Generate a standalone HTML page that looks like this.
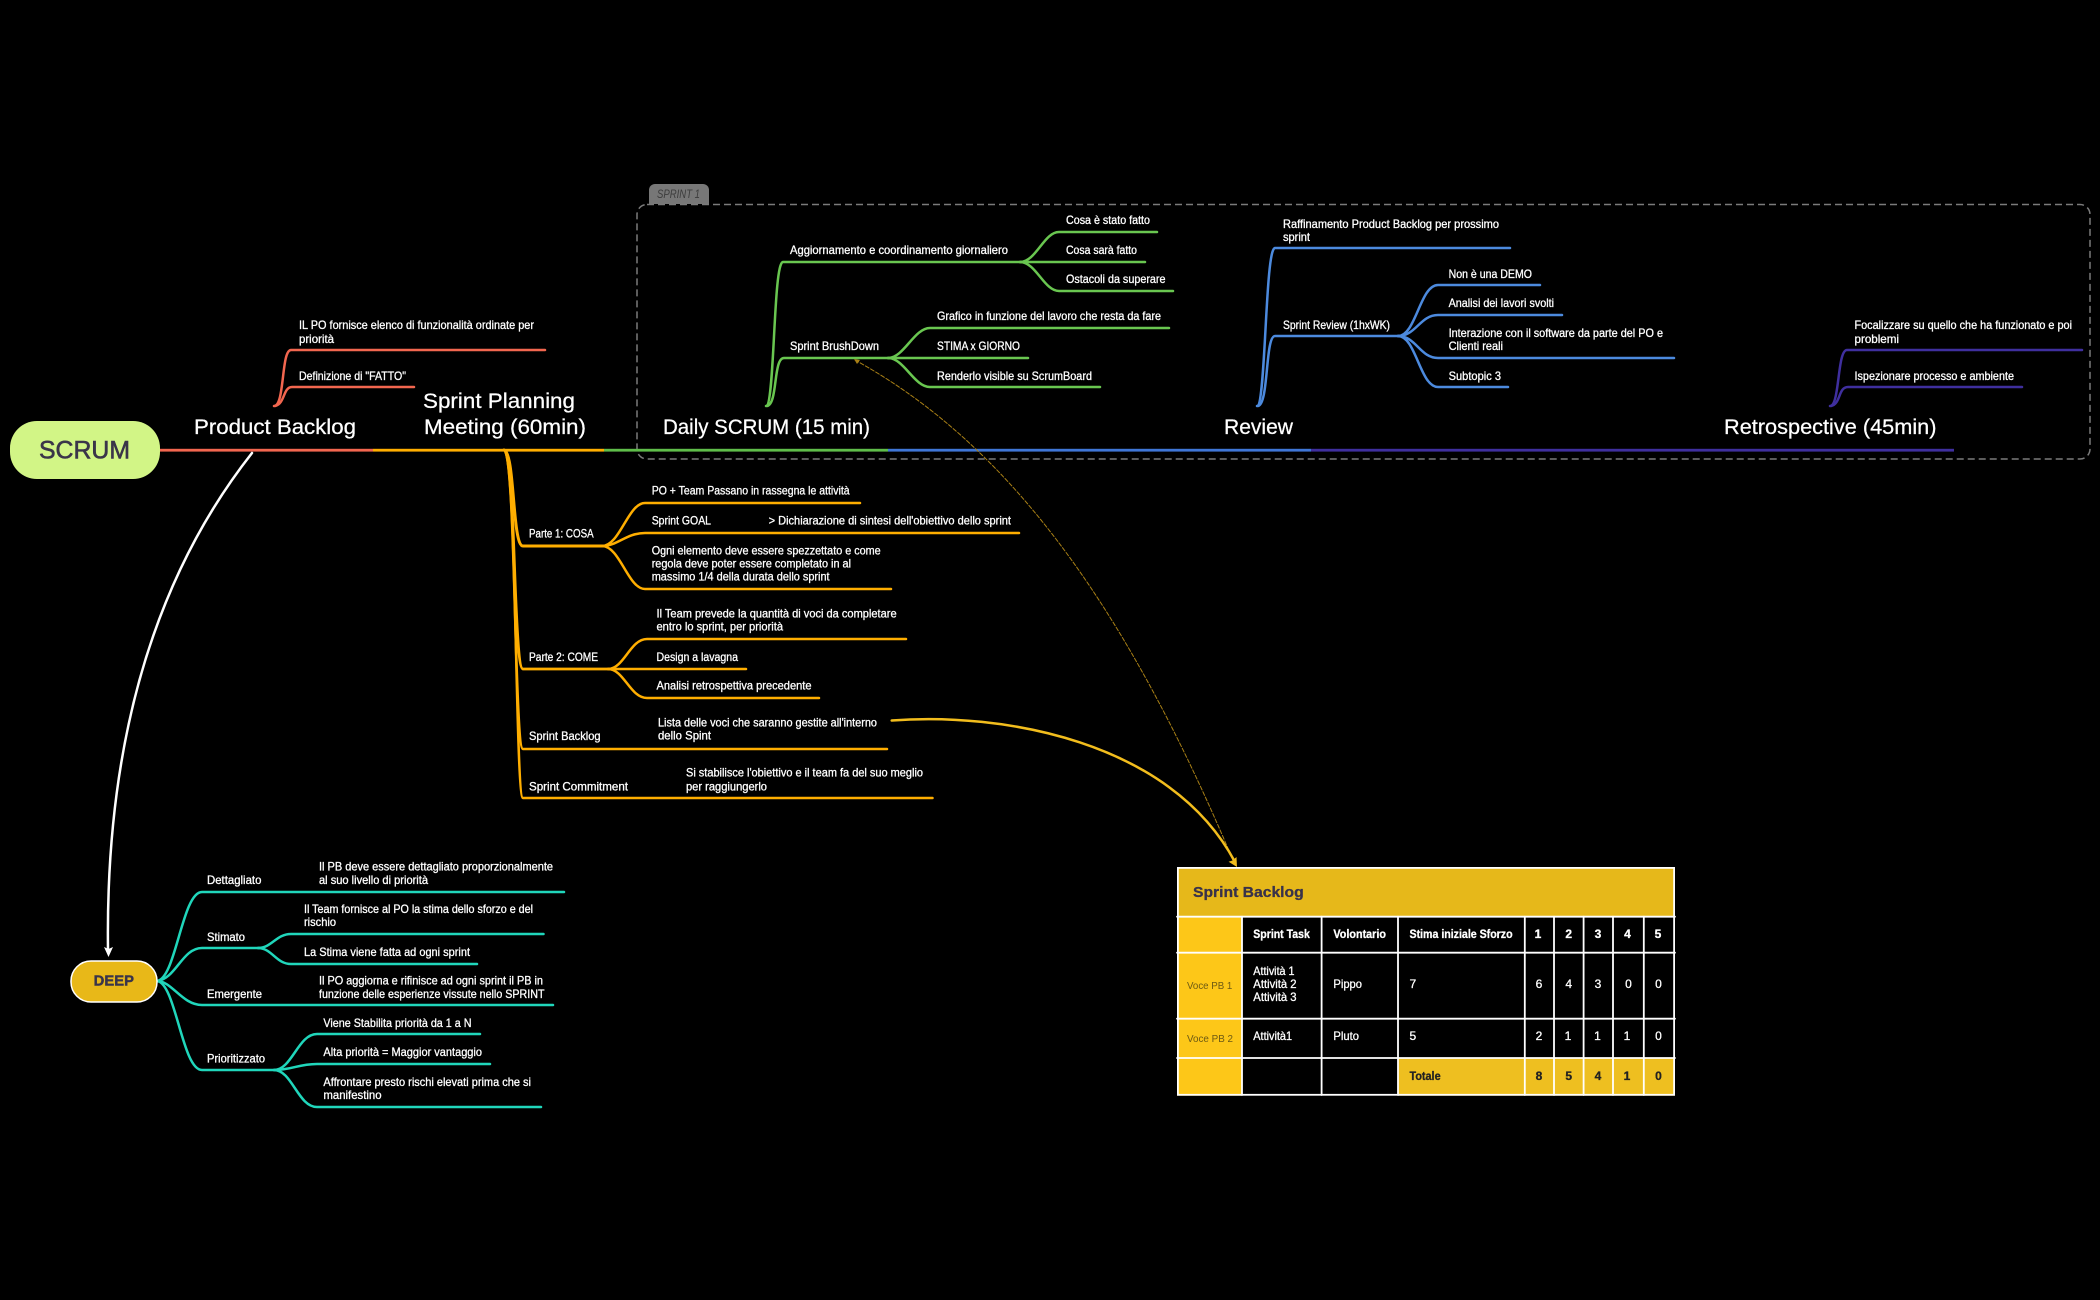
<!DOCTYPE html>
<html lang="it">
<head>
<meta charset="utf-8">
<title>SCRUM</title>
<style>
html,body{margin:0;padding:0;background:#000;width:2100px;height:1300px;overflow:hidden}
svg{display:block}
text{font-family:"Liberation Sans",sans-serif;font-size:12px;fill:#fff;stroke:#fff;stroke-width:.3px}
.t{font-size:21px;stroke-width:.25px}
.d{text-anchor:middle;font-size:12px}
.b{font-weight:bold}
.k{fill:#222;stroke:#222}
.v{fill:#6d5a14;stroke:none;font-size:10.5px}
path{fill:none;stroke-linecap:round}
.r path{stroke:#f2664f;stroke-width:2.500}
.o path{stroke:#ffae00;stroke-width:2.500}
.g path{stroke:#69c650;stroke-width:2.500}
.l path{stroke:#4c8ade;stroke-width:2.500}
.p path{stroke:#3f2f9e;stroke-width:2.500}
.c path{stroke:#20d6bb;stroke-width:2.500}
</style>
</head>
<body>
<svg xmlns="http://www.w3.org/2000/svg" width="2100" height="1300" viewBox="0 0 2100 1300">
<rect width="2100" height="1300" fill="#000"/>

<!-- sprint boundary -->
<path d="M649 204V190a6 6 0 0 1 6-6h48a6 6 0 0 1 6 6V204Z" style="fill:#777;stroke:none"/>
<rect x="637" y="204.500" width="1453" height="254.500" rx="10" ry="10" style="fill:none;stroke:#7b7b7b;stroke-width:1.500;stroke-dasharray:7 4"/>
<text x="657" y="198" textLength="43" lengthAdjust="spacingAndGlyphs" style="font-size:12px;font-style:italic;fill:#3c3c3c;stroke:none">SPRINT 1</text>

<!-- main line -->
<rect x="160" y="448.800" width="213" height="2.800" fill="#f2664f"/>
<rect x="373" y="448.800" width="231" height="2.800" fill="#ffae00"/>
<rect x="604" y="448.800" width="284" height="2.800" fill="#5fbd4a"/>
<rect x="888" y="448.800" width="423" height="2.800" fill="#3f76d6"/>
<rect x="1311" y="448.800" width="643" height="2.800" fill="#3f2f9e"/>

<!-- SCRUM -->
<rect x="10" y="421" width="150" height="58" rx="27" fill="#d2f586"/>
<text x="39" y="458.500" textLength="91" lengthAdjust="spacingAndGlyphs" style="font-size:25px;fill:#3a3549;stroke:#3a3549;stroke-width:.6">SCRUM</text>

<!-- titles -->
<text class="t" x="194" y="434" textLength="162" lengthAdjust="spacingAndGlyphs">Product Backlog</text>
<text class="t" x="423" y="408" textLength="152" lengthAdjust="spacingAndGlyphs">Sprint Planning</text>
<text class="t" x="424" y="434" textLength="162" lengthAdjust="spacingAndGlyphs">Meeting (60min)</text>
<text class="t" x="663" y="434" textLength="207" lengthAdjust="spacingAndGlyphs">Daily SCRUM (15 min)</text>
<text class="t" x="1224" y="434" textLength="69" lengthAdjust="spacingAndGlyphs">Review</text>
<text class="t" x="1724" y="434" textLength="212.500" lengthAdjust="spacingAndGlyphs">Retrospective (45min)</text>

<!-- red -->
<g class="r">
<path d="M274 406C285 406 281 350 291 350H545"/>
<path d="M275 406C285 404 283 387 292 387H414"/>
</g>
<text x="299" y="329" textLength="235" lengthAdjust="spacingAndGlyphs">IL PO fornisce elenco di funzionalità ordinate per</text>
<text x="299" y="343" textLength="35" lengthAdjust="spacingAndGlyphs">priorità</text>
<text x="299" y="380" textLength="107" lengthAdjust="spacingAndGlyphs">Definizione di "FATTO"</text>

<!-- green -->
<g class="g">
<path d="M766 406C775 406 773 262 783 262H1024"/>
<path d="M767 406C778 404 773 358 784 358H892"/>
<path d="M1020 262C1036 262 1044 232 1059 232H1157"/>
<path d="M1020 262H1145"/>
<path d="M1020 262C1036 262 1044 291 1059 291H1173"/>
<path d="M888 358C904 358 914 328 930 328H1169"/>
<path d="M888 358H1028"/>
<path d="M888 358C904 358 914 387 930 387H1100"/>
</g>
<text x="790" y="254" textLength="218" lengthAdjust="spacingAndGlyphs">Aggiornamento e coordinamento giornaliero</text>
<text x="1066" y="224" textLength="84" lengthAdjust="spacingAndGlyphs">Cosa è stato fatto</text>
<text x="1066" y="254" textLength="71" lengthAdjust="spacingAndGlyphs">Cosa sarà fatto</text>
<text x="1066" y="283" textLength="99.500" lengthAdjust="spacingAndGlyphs">Ostacoli da superare</text>
<text x="790" y="350" textLength="89" lengthAdjust="spacingAndGlyphs">Sprint BrushDown</text>
<text x="937" y="320" textLength="224" lengthAdjust="spacingAndGlyphs">Grafico in funzione del lavoro che resta da fare</text>
<text x="937" y="350" textLength="83" lengthAdjust="spacingAndGlyphs">STIMA x GIORNO</text>
<text x="937" y="380" textLength="155" lengthAdjust="spacingAndGlyphs">Renderlo visible su ScrumBoard</text>

<!-- blue -->
<g class="l">
<path d="M1257 406C1266 406 1265 248 1275 248H1510"/>
<path d="M1258 406C1269 404 1265 336 1275 336H1401"/>
<path d="M1398 336C1416 336 1420 285 1438 285H1540"/>
<path d="M1398 336C1416 336 1420 315 1438 315H1562"/>
<path d="M1398 336C1416 336 1420 358 1438 358H1674"/>
<path d="M1398 336C1416 336 1420 387 1438 387H1508"/>
</g>
<text x="1283" y="228" textLength="216" lengthAdjust="spacingAndGlyphs">Raffinamento Product Backlog per prossimo</text>
<text x="1283" y="241" textLength="27" lengthAdjust="spacingAndGlyphs">sprint</text>
<text x="1283" y="329" textLength="107" lengthAdjust="spacingAndGlyphs">Sprint Review (1hxWK)</text>
<text x="1448.600" y="278" textLength="83.400" lengthAdjust="spacingAndGlyphs">Non è una DEMO</text>
<text x="1448.600" y="307" textLength="105.400" lengthAdjust="spacingAndGlyphs">Analisi dei lavori svolti</text>
<text x="1448.600" y="337" textLength="214.400" lengthAdjust="spacingAndGlyphs">Interazione con il software da parte del PO e</text>
<text x="1448.600" y="350" textLength="54.400" lengthAdjust="spacingAndGlyphs">Clienti reali</text>
<text x="1448.600" y="380" textLength="52.400" lengthAdjust="spacingAndGlyphs">Subtopic 3</text>

<!-- purple -->
<g class="p">
<path d="M1830 406C1840 406 1837 350 1847 350H2082"/>
<path d="M1831 406C1841 404 1838 387 1848 387H2022"/>
</g>
<text x="1854.500" y="329" textLength="217.500" lengthAdjust="spacingAndGlyphs">Focalizzare su quello che ha funzionato e poi</text>
<text x="1854.500" y="343" textLength="44.500" lengthAdjust="spacingAndGlyphs">problemi</text>
<text x="1854.500" y="380" textLength="159.500" lengthAdjust="spacingAndGlyphs">Ispezionare processo e ambiente</text>

<!-- orange -->
<g class="o">
<path d="M504 450C515 452 512 546 523 546H606" style="stroke-width:3"/>
<path d="M504 450C516 452 513 669 523 669H613" style="stroke-width:2.800"/>
<path d="M504 450C516 452 514 749 523 749H887" style="stroke-width:2.500"/>
<path d="M504 450C517 452 515 798 523 798H932.500"/>
<path d="M602 546C620 546 628 503 645 503H860"/>
<path d="M602 546C618 546 626 533 645 533H1019"/>
<path d="M602 546C620 546 628 589 645 589H891"/>
<path d="M608 669C624 669 630 639 647 639H906"/>
<path d="M608 669H746"/>
<path d="M608 669C624 669 630 698 647 698H819"/>
</g>
<text x="529" y="537.700" textLength="64.600" lengthAdjust="spacingAndGlyphs">Parte 1: COSA</text>
<text x="651.700" y="494.700" textLength="197.900" lengthAdjust="spacingAndGlyphs">PO + Team Passano in rassegna le attività</text>
<text x="651.700" y="524.700" textLength="59.300" lengthAdjust="spacingAndGlyphs">Sprint GOAL</text>
<text x="768.600" y="524.700" textLength="242.400" lengthAdjust="spacingAndGlyphs">&gt; Dichiarazione di sintesi dell'obiettivo dello sprint</text>
<text x="651.700" y="554.700" textLength="229" lengthAdjust="spacingAndGlyphs">Ogni elemento deve essere spezzettato e come</text>
<text x="651.700" y="567.700" textLength="199.300" lengthAdjust="spacingAndGlyphs">regola deve poter essere completato in al</text>
<text x="651.700" y="580.700" textLength="177.900" lengthAdjust="spacingAndGlyphs">massimo 1/4 della durata dello sprint</text>
<text x="656.500" y="617.700" textLength="240.100" lengthAdjust="spacingAndGlyphs">Il Team prevede la quantità di voci da completare</text>
<text x="656.500" y="630.700" textLength="126.500" lengthAdjust="spacingAndGlyphs">entro lo sprint, per priorità</text>
<text x="529" y="661" textLength="69" lengthAdjust="spacingAndGlyphs">Parte 2: COME</text>
<text x="656.500" y="661" textLength="81.500" lengthAdjust="spacingAndGlyphs">Design a lavagna</text>
<text x="656.500" y="689.700" textLength="155" lengthAdjust="spacingAndGlyphs">Analisi retrospettiva precedente</text>
<text x="529" y="740" textLength="71.600" lengthAdjust="spacingAndGlyphs">Sprint Backlog</text>
<text x="658" y="726.700" textLength="219" lengthAdjust="spacingAndGlyphs">Lista delle voci che saranno gestite all'interno</text>
<text x="658" y="739.700" textLength="53" lengthAdjust="spacingAndGlyphs">dello Spint</text>
<text x="529" y="790.700" textLength="99" lengthAdjust="spacingAndGlyphs">Sprint Commitment</text>
<text x="686" y="776.700" textLength="237" lengthAdjust="spacingAndGlyphs">Si stabilisce l'obiettivo e il team fa del suo meglio</text>
<text x="686" y="790.700" textLength="81" lengthAdjust="spacingAndGlyphs">per raggiungerlo</text>

<!-- dashed thin link -->
<path d="M855 360C1000 440 1120 590 1235 865" style="stroke:#a98016;stroke-width:1;stroke-dasharray:4 2"/>
<polygon points="854,359 860,360 857,364" fill="#a98016"/>

<!-- yellow link -->
<path d="M891.700 720.500C1000 712 1170 740 1235 862" style="stroke:#f2bd1d;stroke-width:2.500"/>
<polygon points="1237,867 1228.600,861.700 1232.500,860.500 1236.500,857" fill="#f2bd1d"/>

<!-- white link -->
<path d="M252 453C160 570 105 730 108 950" style="stroke:#fff;stroke-width:2.500"/>
<polygon points="108.500,957 104,947 108.500,949 113,947" fill="#fff"/>

<!-- DEEP -->
<g class="c">
<path d="M157 981C176 979 182 892 202 892H564"/>
<path d="M157 981C176 979 182 948 202 948H262"/>
<path d="M157 981C172 981 182 1005 202 1005H553"/>
<path d="M157 981C176 983 182 1070 202 1070H279"/>
<path d="M258 948C272 948 276 934 291 934H543.500"/>
<path d="M258 948C272 948 276 964 291 964H477"/>
<path d="M274 1070C292 1070 298 1034 317 1034H480"/>
<path d="M274 1070C292 1070 298 1064 317 1064H490"/>
<path d="M274 1070C292 1070 298 1107 317 1107H541"/>
</g>
<rect x="71" y="961" width="86" height="41" rx="20" fill="#e8b818" stroke="#fff" stroke-width="1.500"/>
<text class="b" x="93.700" y="985.700" textLength="40.300" lengthAdjust="spacingAndGlyphs" style="font-size:14.500px;fill:#39344a;stroke:#39344a;stroke-width:.4">DEEP</text>

<text x="207" y="884" textLength="54.400" lengthAdjust="spacingAndGlyphs">Dettagliato</text>
<text x="319" y="870.700" textLength="234" lengthAdjust="spacingAndGlyphs">Il PB deve essere dettagliato proporzionalmente</text>
<text x="319" y="884" textLength="109" lengthAdjust="spacingAndGlyphs">al suo livello di priorità</text>
<text x="304" y="913" textLength="229" lengthAdjust="spacingAndGlyphs">Il Team fornisce al PO la stima dello sforzo e del</text>
<text x="304" y="926" textLength="32" lengthAdjust="spacingAndGlyphs">rischio</text>
<text x="207" y="941" textLength="38" lengthAdjust="spacingAndGlyphs">Stimato</text>
<text x="304" y="956" textLength="166" lengthAdjust="spacingAndGlyphs">La Stima viene fatta ad ogni sprint</text>
<text x="319" y="984.700" textLength="224" lengthAdjust="spacingAndGlyphs">Il PO aggiorna e rifinisce ad ogni sprint il PB in</text>
<text x="319" y="998" textLength="225.500" lengthAdjust="spacingAndGlyphs">funzione delle esperienze vissute nello SPRINT</text>
<text x="207" y="998" textLength="55" lengthAdjust="spacingAndGlyphs">Emergente</text>
<text x="323.400" y="1027" textLength="148.100" lengthAdjust="spacingAndGlyphs">Viene Stabilita priorità da 1 a N</text>
<text x="323.400" y="1056" textLength="158.600" lengthAdjust="spacingAndGlyphs">Alta priorità = Maggior vantaggio</text>
<text x="207" y="1062.700" textLength="58" lengthAdjust="spacingAndGlyphs">Prioritizzato</text>
<text x="323.400" y="1086" textLength="207.600" lengthAdjust="spacingAndGlyphs">Affrontare presto rischi elevati prima che si</text>
<text x="323.400" y="1099" textLength="58.200" lengthAdjust="spacingAndGlyphs">manifestino</text>

<!-- table -->
<rect x="1177" y="867" width="498" height="228.700" fill="#000"/>
<rect x="1177" y="867" width="498" height="49.700" fill="#e6b81a"/>
<rect x="1177" y="916.700" width="65" height="179" fill="#fdc718"/>
<rect x="1398" y="1058" width="277" height="37.700" fill="#eebf20"/>
<g stroke="#fff" stroke-width="1.800" fill="none">
<rect x="1177.900" y="867.900" width="496.200" height="226.900"/>
<path d="M1177 916.700H1675M1177 952.700H1675M1177 1018.700H1675M1177 1058H1675"/>
<path d="M1242 916.700V1095M1321.600 916.700V1095M1398 916.700V1095M1524.800 916.700V1095M1554 916.700V1095M1583.600 916.700V1095M1613 916.700V1095M1643.800 916.700V1095"/>
</g>
<text class="b" x="1193" y="897" textLength="110.700" lengthAdjust="spacingAndGlyphs" style="font-size:15px;fill:#39324a;stroke:#39324a;stroke-width:.3">Sprint Backlog</text>

<text class="b" x="1253.300" y="938.200" textLength="56.500" lengthAdjust="spacingAndGlyphs">Sprint Task</text>
<text class="b" x="1333.400" y="938.200" textLength="52.600" lengthAdjust="spacingAndGlyphs">Volontario</text>
<text class="b" x="1409.500" y="938.200" textLength="103.100" lengthAdjust="spacingAndGlyphs">Stima iniziale Sforzo</text>
<text class="d b" x="1538" y="938.200">1</text>
<text class="d b" x="1568.700" y="938.200">2</text>
<text class="d b" x="1598" y="938.200">3</text>
<text class="d b" x="1627.500" y="938.200">4</text>
<text class="d b" x="1658" y="938.200">5</text>

<text class="v" x="1187" y="989" textLength="45.300" lengthAdjust="spacingAndGlyphs">Voce PB 1</text>
<text x="1253.300" y="975.200" textLength="41.200" lengthAdjust="spacingAndGlyphs">Attività 1</text>
<text x="1253.300" y="988.200" textLength="43.300" lengthAdjust="spacingAndGlyphs">Attività 2</text>
<text x="1253.300" y="1001.200" textLength="43.300" lengthAdjust="spacingAndGlyphs">Attività 3</text>
<text x="1333.400" y="988.200" textLength="28.600" lengthAdjust="spacingAndGlyphs">Pippo</text>
<text x="1409.500" y="988.200">7</text>
<text class="d" x="1539" y="988.200">6</text>
<text class="d" x="1568.700" y="988.200">4</text>
<text class="d" x="1598" y="988.200">3</text>
<text class="d" x="1628.500" y="988.200">0</text>
<text class="d" x="1658.500" y="988.200">0</text>

<text class="v" x="1187" y="1042" textLength="46" lengthAdjust="spacingAndGlyphs">Voce PB 2</text>
<text x="1253.300" y="1040.200" textLength="38.700" lengthAdjust="spacingAndGlyphs">Attività1</text>
<text x="1333.400" y="1040.200" textLength="25.600" lengthAdjust="spacingAndGlyphs">Pluto</text>
<text x="1409.500" y="1040.200">5</text>
<text class="d" x="1539" y="1040.200">2</text>
<text class="d" x="1568" y="1040.200">1</text>
<text class="d" x="1597.500" y="1040.200">1</text>
<text class="d" x="1627" y="1040.200">1</text>
<text class="d" x="1658.500" y="1040.200">0</text>

<text class="k b" x="1409.500" y="1080.200" textLength="31.100" lengthAdjust="spacingAndGlyphs">Totale</text>
<text class="d k b" x="1539" y="1080.200">8</text>
<text class="d k b" x="1568.700" y="1080.200">5</text>
<text class="d k b" x="1598" y="1080.200">4</text>
<text class="d k b" x="1627" y="1080.200">1</text>
<text class="d k b" x="1658.500" y="1080.200">0</text>
</svg>
</body>
</html>
